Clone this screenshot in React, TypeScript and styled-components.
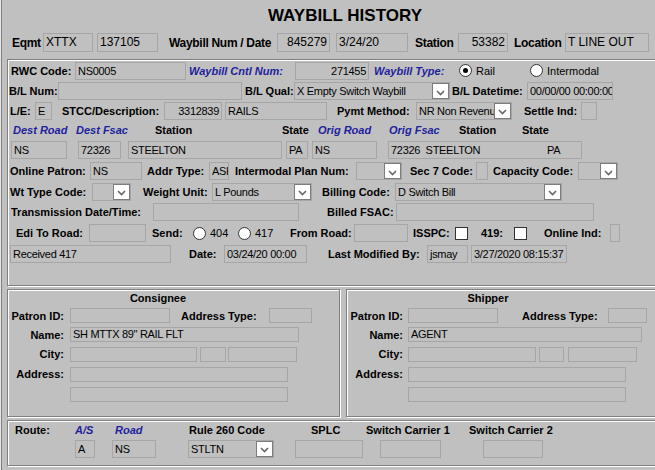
import styled, { createGlobalStyle } from "styled-components"

const GlobalStyle = createGlobalStyle`
    html, body {
        margin: 0;
        padding: 0;
        background: #c0c0c0;
    }
    body {
        font-family: "Liberation Sans", Arial, sans-serif;
    }
    `

const Window = styled.div`
    width: 655px;
    height: 470px;
    overflow: hidden;
    background: #c0c0c0;
    color: #000;
    font-family: "Liberation Sans", Arial, sans-serif;
    box-shadow: inset 1px 0 0 #e4e4e4, inset 2px 0 0 #808080;
    `
const Inner = styled.div`
    width: 690px;
    `
const Title = styled.div`
    box-sizing: border-box;
    height: 33px;
    padding-top: 6px;
    line-height: 20px;
    text-align: center;
    font-size: 17px;
    font-weight: bold;
    `
const Row = styled.div<{ $h: number }>`
    display: flex;
    align-items: center;
    height: ${p => p.$h}px;
    `
const Label = styled.span<{ $ml?: number; $w: number; $blue?: boolean; $right?: boolean; $center?: boolean }>`
    flex: none;
    margin-left: ${p => p.$ml ?? 0}px;
    width: ${p => p.$w}px;
    font-size: 11px;
    font-weight: bold;
    font-style: ${p => (p.$blue ? "italic" : "normal")};
    color: ${p => (p.$blue ? "#1e1e9e" : "#000")};
    white-space: nowrap;
    text-align: ${p => (p.$right ? "right" : p.$center ? "center" : "left")};
    `
const HeadLabel = styled(Label)`
    font-size: 12px;
    letter-spacing: -0.3px;
    `
const Option = styled.span<{ $ml?: number; $w: number }>`
    flex: none;
    margin-left: ${p => p.$ml ?? 0}px;
    width: ${p => p.$w}px;
    font-size: 11px;
    white-space: nowrap;
    `
const Field = styled.div<{ $ml?: number; $w: number; $h?: number; $right?: boolean }>`
    flex: none;
    box-sizing: border-box;
    margin-left: ${p => p.$ml ?? 0}px;
    width: ${p => p.$w}px;
    height: ${p => p.$h ?? 18}px;
    line-height: ${p => (p.$h ?? 18) - 2}px;
    border: 1px solid #a6a6a6;
    padding: 0 2px;
    font-size: 11px;
    letter-spacing: -0.3px;
    white-space: nowrap;
    overflow: hidden;
    text-align: ${p => (p.$right ? "right" : "left")};
    `
const HeadField = styled(Field)`
    font-size: 12px;
    letter-spacing: 0;
    `
const Segment = styled.span<{ $w: number }>`
    display: inline-block;
    width: ${p => p.$w}px;
    `
const SelectBox = styled(Field)`
    display: flex;
    padding: 0 0 0 2px;
    `
const SelectText = styled.span`
    flex: 1;
    overflow: hidden;
    `
const DropButton = styled.span`
    flex: none;
    box-sizing: border-box;
    width: 17px;
    height: 100%;
    background: #fff;
    border: 1px solid #7d7d7d;
    display: flex;
    align-items: center;
    justify-content: center;
    padding-top: 3px;
    `
const Radio = styled.span<{ $ml?: number; $on?: boolean }>`
    flex: none;
    box-sizing: border-box;
    margin-left: ${p => p.$ml ?? 0}px;
    width: 13px;
    height: 13px;
    border-radius: 50%;
    border: 1px solid #333;
    background: #fff;
    display: flex;
    align-items: center;
    justify-content: center;
    &::after {
        content: "";
        width: 5px;
        height: 5px;
        border-radius: 50%;
        background: ${p => (p.$on ? "#000" : "transparent")};
    }
    `
const Check = styled.span<{ $ml?: number }>`
    flex: none;
    box-sizing: border-box;
    margin-left: ${p => p.$ml ?? 0}px;
    width: 13px;
    height: 13px;
    border: 1px solid #333;
    background: #fff;
    `
const Groove = styled.div`
    border: 1px solid #808080;
    box-shadow: inset 1px 1px 0 #fff, 1px 1px 0 #fff;
    `
const MainPanel = styled(Groove)`
    margin: 7px 0 0 7px;
    padding-bottom: 21px;
    `
const PanelPair = styled.div`
    display: flex;
    margin-top: 3px;
    `
const ContactPanel = styled(Groove)<{ $ml: number; $w?: number }>`
    box-sizing: border-box;
    margin-left: ${p => p.$ml}px;
    ${p => (p.$w ? `width: ${p.$w}px;` : "flex: 1;")}
    padding-bottom: 12px;
    `
const RoutePanel = styled(Groove)`
    margin: 3px 0 0 7px;
    padding-bottom: 7px;
    `

const Select = ({ ml, w, h, text }: { ml?: number; w: number; h?: number; text?: string }) => (
    <SelectBox $ml={ml} $w={w} $h={h}>
        <SelectText>{text}</SelectText>
        <DropButton>
            <svg width="9" height="6" viewBox="0 0 9 6">
                <polyline points="1,1 4.5,4.5 8,1" fill="none" stroke="#666" strokeWidth="1.6" />
            </svg>
        </DropButton>
    </SelectBox>
)

type Party = {
    title: string
    titleMl: number
    labelW: number
    fieldMl: number
    patronW: number
    typeMl: number
    typeW: number
    typeFieldMl: number
    typeFieldW: number
    name: string
    nameW: number
    city: [number, number, number, number, number]
}

const Contact = ({ p }: { p: Party }) => (
    <>
        <Row $h={16}>
            <Label $ml={p.titleMl} $w={80} $center>{p.title}</Label>
        </Row>
        <Row $h={19}>
            <Label $w={p.labelW} $right>Patron ID:</Label>
            <Field $ml={p.fieldMl} $w={p.patronW} $h={15} />
            <Label $ml={p.typeMl} $w={p.typeW}>Address Type:</Label>
            <Field $ml={p.typeFieldMl} $w={p.typeFieldW} $h={15} />
        </Row>
        <Row $h={19}>
            <Label $w={p.labelW} $right>Name:</Label>
            <Field $ml={p.fieldMl} $w={p.nameW} $h={15}>{p.name}</Field>
        </Row>
        <Row $h={20}>
            <Label $w={p.labelW} $right>City:</Label>
            <Field $ml={p.fieldMl} $w={p.city[0]} $h={15} />
            <Field $ml={p.city[1]} $w={p.city[2]} $h={15} />
            <Field $ml={p.city[3]} $w={p.city[4]} $h={15} />
        </Row>
        <Row $h={20}>
            <Label $w={p.labelW} $right>Address:</Label>
            <Field $ml={p.fieldMl} $w={218} $h={15} />
        </Row>
        <Row $h={20}>
            <Label $w={p.labelW} $right></Label>
            <Field $ml={p.fieldMl} $w={218} $h={15} />
        </Row>
    </>
)

const consignee: Party = {
    title: "Consignee", titleMl: 110, labelW: 56, fieldMl: 6, patronW: 100,
    typeMl: 11, typeW: 79, typeFieldMl: 9, typeFieldW: 43,
    name: 'SH MTTX 89" RAIL FLT', nameW: 229, city: [127, 3, 26, 2, 69],
}
const shipper: Party = {
    title: "Shipper", titleMl: 101, labelW: 56, fieldMl: 5, patronW: 90,
    typeMl: 24, typeW: 80, typeFieldMl: 6, typeFieldW: 39,
    name: "AGENT", nameW: 234, city: [128, 3, 25, 4, 69],
}

export default function App() {
    return (
        <Window>
            <GlobalStyle />
            <Inner>
                <Title>WAYBILL HISTORY</Title>
                <Row $h={19}>
                    <HeadLabel $ml={12} $w={29}>Eqmt</HeadLabel>
                    <HeadField $ml={2} $w={50} $h={19}>XTTX</HeadField>
                    <HeadField $ml={4} $w={61} $h={19}>137105</HeadField>
                    <HeadLabel $ml={11} $w={104}>Waybill Num / Date</HeadLabel>
                    <HeadField $ml={4} $w={53} $h={19} $right>845279</HeadField>
                    <HeadField $ml={6} $w={72} $h={19}>3/24/20</HeadField>
                    <HeadLabel $ml={7} $w={38}>Station</HeadLabel>
                    <HeadField $ml={5} $w={50} $h={19} $right>53382</HeadField>
                    <HeadLabel $ml={6} $w={47}>Location</HeadLabel>
                    <HeadField $ml={4} $w={84} $h={19}>T LINE OUT</HeadField>
                </Row>

                <MainPanel>
                    <Row $h={21}>
                        <Label $ml={3} $w={60}>RWC Code:</Label>
                        <Field $ml={4} $w={111}>NS0005</Field>
                        <Label $ml={3} $w={101} $blue>Waybill Cntl Num:</Label>
                        <Field $ml={5} $w={74} $right>271455</Field>
                        <Label $ml={5} $w={76} $blue>Waybill Type:</Label>
                        <Radio $ml={9} $on />
                        <Option $ml={4} $w={25}>Rail</Option>
                        <Radio $ml={29} />
                        <Option $ml={4} $w={50}>Intermodal</Option>
                    </Row>
                    <Row $h={20}>
                        <Label $ml={1} $w={49}>B/L Num:</Label>
                        <Field $w={184} />
                        <Label $ml={3} $w={48}>B/L Qual:</Label>
                        <Select ml={1} w={156} text="X Empty Switch Waybill" />
                        <Label $ml={2} $w={72}>B/L Datetime:</Label>
                        <Field $ml={3} $w={86}>00/00/00 00:00:00</Field>
                    </Row>
                    <Row $h={19}>
                        <Label $ml={2} $w={22}>L/E:</Label>
                        <Field $ml={3} $w={17}>E</Field>
                        <Label $ml={10} $w={98}>STCC/Description:</Label>
                        <Field $ml={4} $w={58} $right>3312839</Field>
                        <Field $ml={3} $w={102}>RAILS</Field>
                        <Label $ml={10} $w={75}>Pymt Method:</Label>
                        <Select ml={4} w={96} text="NR Non Revenue" />
                        <Label $ml={12} $w={54}>Settle Ind:</Label>
                        <Field $ml={3} $w={16} />
                    </Row>
                    <Row $h={19}>
                        <Label $ml={5} $w={54} $blue>Dest Road</Label>
                        <Label $ml={9} $w={50} $blue>Dest Fsac</Label>
                        <Label $ml={29} $w={37}>Station</Label>
                        <Label $ml={90} $w={26}>State</Label>
                        <Label $ml={10} $w={57} $blue>Orig Road</Label>
                        <Label $ml={14} $w={52} $blue>Orig Fsac</Label>
                        <Label $ml={18} $w={37}>Station</Label>
                        <Label $ml={26} $w={26}>State</Label>
                    </Row>
                    <Row $h={21}>
                        <Field $ml={3} $w={56}>NS</Field>
                        <Field $ml={11} $w={43}>72326</Field>
                        <Field $ml={7} $w={154}>STEELTON</Field>
                        <Field $ml={4} $w={22}>PA</Field>
                        <Field $ml={4} $w={65}>NS</Field>
                        <Field $ml={11} $w={194}>
                            <Segment $w={156}>72326&nbsp;&nbsp;STEELTON</Segment>PA
                        </Field>
                    </Row>
                    <Row $h={22}>
                        <Label $ml={2} $w={76}>Online Patron:</Label>
                        <Field $ml={4} $w={52}>NS</Field>
                        <Label $ml={5} $w={59}>Addr Type:</Label>
                        <Field $ml={3} $w={20}>ASH</Field>
                        <Label $ml={6} $w={117}>Intermodal Plan Num:</Label>
                        <Select ml={4} w={46} />
                        <Label $ml={8} $w={62}>Sec 7 Code:</Label>
                        <Field $ml={4} $w={12} />
                        <Label $ml={5} $w={81}>Capacity Code:</Label>
                        <Select ml={4} w={40} />
                    </Row>
                    <Row $h={19}>
                        <Label $ml={2} $w={78}>Wt Type Code:</Label>
                        <Select ml={4} w={39} />
                        <Label $ml={12} $w={65}>Weight Unit:</Label>
                        <Select ml={4} w={100} text="L Pounds" />
                        <Label $ml={10} $w={71}>Billing Code:</Label>
                        <Select ml={2} w={167} text="D Switch Bill" />
                    </Row>
                    <Row $h={21}>
                        <Label $ml={3} $w={136}>Transmission Date/Time:</Label>
                        <Field $ml={6} $w={146} />
                        <Label $ml={28} $w={64}>Billed FSAC:</Label>
                        <Field $ml={5} $w={198} />
                    </Row>
                    <Row $h={22}>
                        <Label $ml={8} $w={64}>Edi To Road:</Label>
                        <Field $ml={9} $w={57} />
                        <Label $ml={6} $w={30}>Send:</Label>
                        <Radio $ml={11} />
                        <Option $ml={4} $w={18}>404</Option>
                        <Radio $ml={10} />
                        <Option $ml={4} $w={18}>417</Option>
                        <Label $ml={17} $w={55}>From Road:</Label>
                        <Field $ml={9} $w={54} />
                        <Label $ml={5} $w={34}>ISSPC:</Label>
                        <Check $ml={8} />
                        <Label $ml={13} $w={21}>419:</Label>
                        <Check $ml={12} />
                        <Label $ml={17} $w={58}>Online Ind:</Label>
                        <Field $ml={8} $w={10} />
                    </Row>
                    <Row $h={20}>
                        <Field $ml={2} $w={161}>Received 417</Field>
                        <Label $ml={18} $w={28}>Date:</Label>
                        <Field $ml={7} $w={83}>03/24/20 00:00</Field>
                        <Label $ml={21} $w={92}>Last Modified By:</Label>
                        <Field $ml={7} $w={41}>jsmay</Field>
                        <Field $ml={3} $w={96}>3/27/2020 08:15:37</Field>
                    </Row>
                </MainPanel>

                <PanelPair>
                    <ContactPanel $ml={7} $w={333}>
                        <Contact p={consignee} />
                    </ContactPanel>
                    <ContactPanel $ml={6}>
                        <Contact p={shipper} />
                    </ContactPanel>
                </PanelPair>

                <RoutePanel>
                    <Row $h={18}>
                        <Label $ml={7} $w={35}>Route:</Label>
                        <Label $ml={25} $w={20} $blue>A/S</Label>
                        <Label $ml={20} $w={29} $blue>Road</Label>
                        <Label $ml={45} $w={77}>Rule 260 Code</Label>
                        <Label $ml={45} $w={27}>SPLC</Label>
                        <Label $ml={28} $w={86}>Switch Carrier 1</Label>
                        <Label $ml={17} $w={87}>Switch Carrier 2</Label>
                    </Row>
                    <Row $h={19}>
                        <Field $ml={67} $w={20}>A</Field>
                        <Field $ml={17} $w={44}>NS</Field>
                        <Select ml={32} w={86} text="STLTN" />
                        <Field $ml={21} $w={68} />
                        <Field $ml={17} $w={61} />
                        <Field $ml={42} $w={60} />
                    </Row>
                </RoutePanel>
            </Inner>
        </Window>
    )
}
